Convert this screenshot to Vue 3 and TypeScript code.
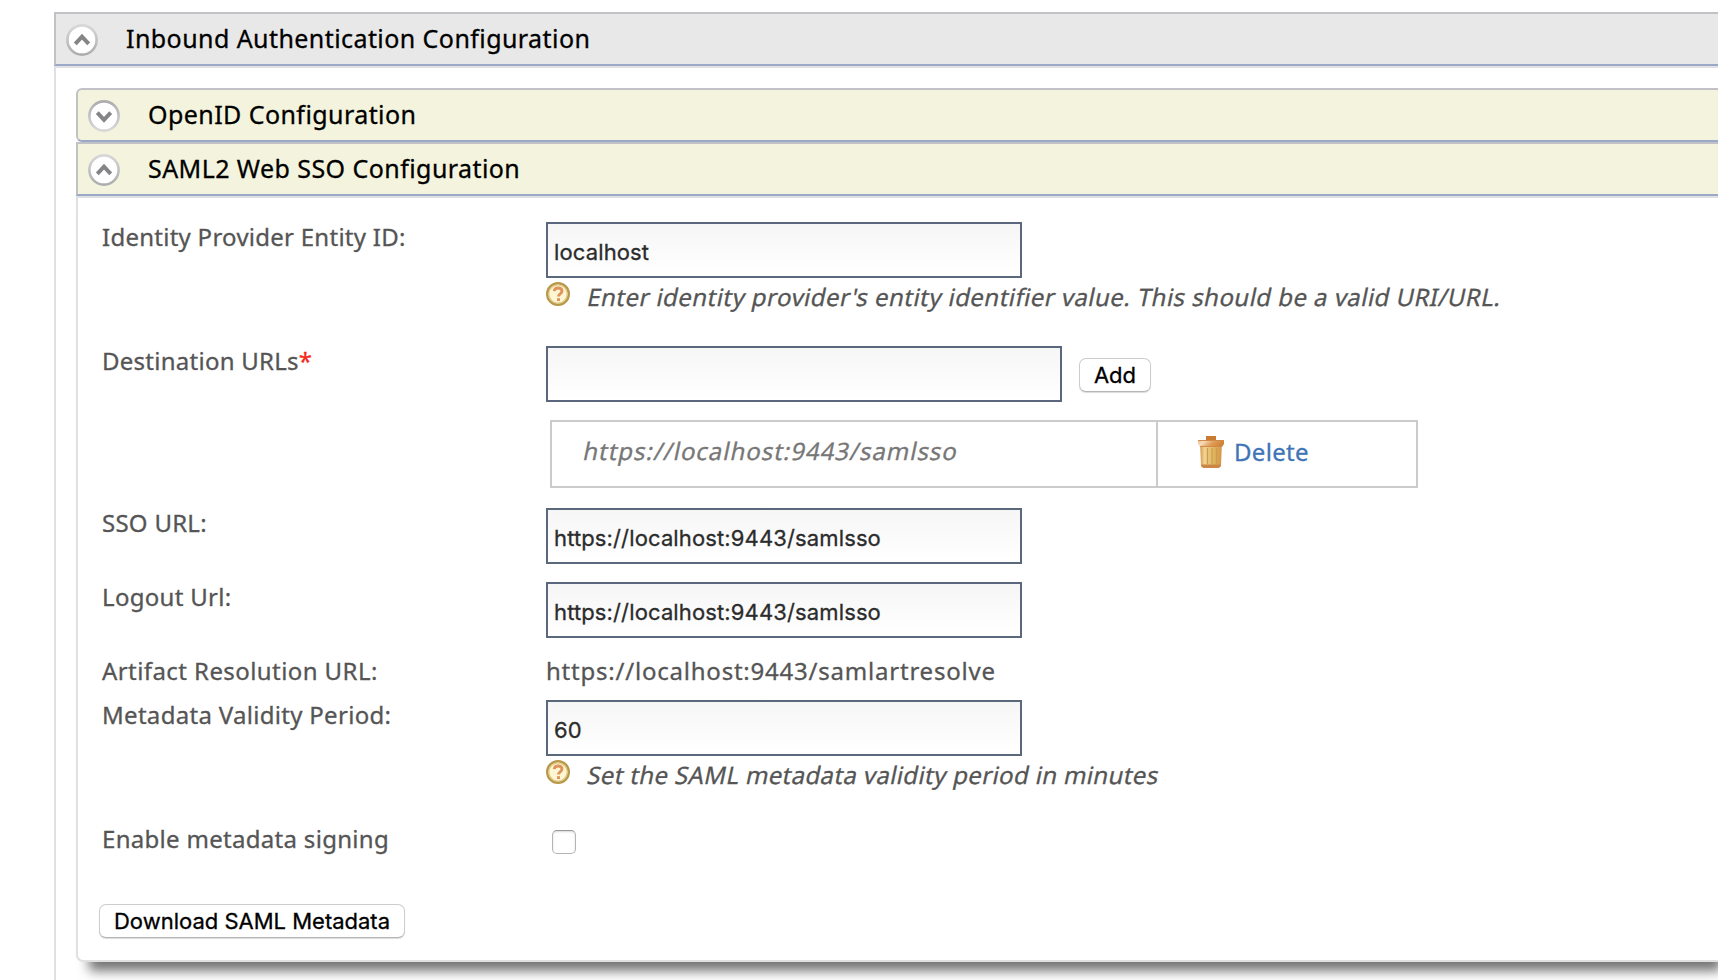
<script setup lang="ts">
import { ref } from 'vue'

const entityId = ref('localhost')
const destination = ref('')
const destinations = ref<string[]>(['https://localhost:9443/samlsso'])
const ssoUrl = ref('https://localhost:9443/samlsso')
const logoutUrl = ref('https://localhost:9443/samlsso')
const validity = ref('60')
const signing = ref(false)

function addDestination(): void {
  const value = destination.value.trim()
  if (value) {
    destinations.value.push(value)
    destination.value = ''
  }
}

function removeDestination(index: number): void {
  destinations.value.splice(index, 1)
}
</script>

<template>
  <svg class="defs" width="0" height="0" aria-hidden="true">
    <defs>
      <linearGradient id="ring" x1="0" y1="0" x2="0" y2="1">
        <stop offset="0" stop-color="#d8d8da" />
        <stop offset="1" stop-color="#adadaf" />
      </linearGradient>
      <linearGradient id="ringFlip" x1="0" y1="0" x2="0" y2="1">
        <stop offset="0" stop-color="#adadaf" />
        <stop offset="1" stop-color="#d8d8da" />
      </linearGradient>
      <linearGradient id="canBody" x1="0" y1="0" x2="1" y2="0">
        <stop offset="0" stop-color="#d99a4c" />
        <stop offset="0.2" stop-color="#f0d494" />
        <stop offset="0.6" stop-color="#dfb861" />
        <stop offset="1" stop-color="#d3944a" />
      </linearGradient>
      <linearGradient id="canLid" x1="0" y1="0" x2="1" y2="0.3">
        <stop offset="0" stop-color="#e9b98a" />
        <stop offset="0.25" stop-color="#f7dcbd" />
        <stop offset="0.6" stop-color="#e2a05a" />
        <stop offset="1" stop-color="#cf8238" />
      </linearGradient>
      <symbol id="chevronUp" viewBox="0 0 32 32">
        <circle cx="16" cy="16" r="14.6" fill="#fff" stroke="url(#ring)" stroke-width="2.6" />
        <path d="M9.300 19.800 16 12.600l6.700 7.200" fill="none" stroke="#858587" stroke-width="4" />
      </symbol>
      <symbol id="chevronDown" viewBox="0 0 32 32">
        <circle cx="16" cy="16" r="14.6" fill="#fff" stroke="url(#ringFlip)" stroke-width="2.6" />
        <path d="M9.300 12.600 16 19.800l6.700-7.200" fill="none" stroke="#858587" stroke-width="4" />
      </symbol>
      <symbol id="help" viewBox="0 0 24 24">
        <circle cx="12" cy="12" r="10.800" fill="#fdf6d3" stroke="#b8974a" stroke-width="2.400" />
        <circle cx="12" cy="12" r="9.200" fill="none" stroke="#e0cc8a" stroke-width="1.300" />
        <path d="M8.200 9.100c.3-2.100 1.900-3.100 3.900-3.100 2.300 0 3.900 1.200 3.900 3.100 0 2.700-3.500 2.700-3.500 5.300" fill="none" stroke="#e0935a" stroke-width="2.900" />
        <path d="M11 16.200h3v2.800h-3z" fill="#e0935a" />
      </symbol>
    </defs>
  </svg>

  <section class="outer">
    <header class="bar bar-main">
      <svg class="toggle"><use href="#chevronUp" /></svg>
      <h2 class="title">Inbound Authentication Configuration</h2>
    </header>

    <div class="content">
      <header class="bar bar-sub rounded">
        <svg class="toggle"><use href="#chevronDown" /></svg>
        <h2 class="title">OpenID Configuration</h2>
      </header>
      <header class="bar bar-sub">
        <svg class="toggle"><use href="#chevronUp" /></svg>
        <h2 class="title">SAML2 Web SSO Configuration</h2>
      </header>

      <div class="panel">
        <div class="row row-entity">
          <label class="label snug">Identity Provider Entity ID:</label>
          <div class="field">
            <input v-model="entityId" class="input" type="text" />
            <div class="hint">
              <svg class="help"><use href="#help" /></svg>
              <span class="slanted airy">Enter identity provider's entity identifier value. This should be a valid URI/URL.</span>
            </div>
          </div>
        </div>

        <div class="row row-destination">
          <label class="label snug">Destination URLs<span class="required">*</span></label>
          <div class="field">
            <div class="adder">
              <input v-model="destination" class="input input-long" type="text" />
              <button class="button button-add" type="button" @click="addDestination">Add</button>
            </div>
            <div class="list">
              <div v-for="(url, index) in destinations" :key="url" class="entry">
                <div class="entry-url"><span class="slanted">{{ url }}</span></div>
                <a class="entry-delete" @click="removeDestination(index)">
                  <svg class="trash" viewBox="0 0 26 32">
                    <path d="M8 4V0h10v4z" fill="#cb7a31" />
                    <path d="M2.200 10h21.600L23 30l-2 2H5l-2-2z" fill="url(#canBody)" />
                    <path d="M9.500 12v16M14 12v16M18.500 12v16" stroke="#cf9a4a" stroke-width="1.200" />
                    <path d="M3 28.500h20l-.6 1.700L20.500 32h-15l-1.900-1.800z" fill="#cc8544" />
                    <path d="M0 4h26v4l-2 3H2L0 8z" fill="url(#canLid)" />
                    <path d="M0 4.500h26M2 10.500h22" stroke="#d18a49" stroke-width="1" />
                  </svg>
                  <span>Delete</span>
                </a>
              </div>
            </div>
          </div>
        </div>

        <div class="row row-input">
          <label class="label snug">SSO URL:</label>
          <input v-model="ssoUrl" class="input" type="text" />
        </div>
        <div class="row row-input">
          <label class="label">Logout Url:</label>
          <input v-model="logoutUrl" class="input" type="text" />
        </div>
        <div class="row row-artifact">
          <label class="label loose">Artifact Resolution URL:</label>
          <span class="value">https://localhost:9443/samlartresolve</span>
        </div>
        <div class="row row-validity">
          <label class="label">Metadata Validity Period:</label>
          <div class="field">
            <input v-model="validity" class="input" type="text" />
            <div class="hint">
              <svg class="help"><use href="#help" /></svg>
              <span class="slanted">Set the SAML metadata validity period in minutes</span>
            </div>
          </div>
        </div>
        <div class="row row-signing">
          <label class="label">Enable metadata signing</label>
          <input v-model="signing" class="checkbox" type="checkbox" />
        </div>

        <button class="button button-download" type="button">Download SAML Metadata</button>
      </div>
    </div>
  </section>
</template>

<style>
body {
  background: #fff;
  overflow: hidden;
}
</style>

<style scoped>
* {
  box-sizing: border-box;
}

.defs {
  position: absolute;
}

.outer {
  height: 980px;
  padding: 12px 0 0 54px;
  overflow: hidden;
  font-family: "Noto Sans", "Open Sans", sans-serif;
  font-size: 24px;
  line-height: 30px;
  color: #555;
  -webkit-text-stroke: 0.3px currentColor;
}

.bar {
  display: flex;
  align-items: center;
  height: 54px;
  border: 2px solid #c2c2c6;
  border-right: 0;
  border-bottom-color: #9aa9c8;
  padding-left: 10px;
}

.bar-main {
  background: #e8e8e8;
}

.bar-sub {
  background: #f4f3dd;
}

.rounded {
  border-radius: 6px 0 0 6px;
}

.toggle {
  flex: none;
  width: 32px;
  height: 32px;
  margin-top: 2px;
}

.title {
  margin: 0 0 2px 28px;
  font-size: 25px;
  font-weight: 400;
  line-height: 30px;
  letter-spacing: 0.43px;
  color: #000;
  white-space: nowrap;
}

.content {
  height: 914px;
  border-top: 2px solid #e2e2e4;
  border-left: 2px solid #e0e0e2;
  padding: 20px 0 0 20px;
}

.panel {
  height: 766px;
  border: 2px solid #e0e0e2;
  border-right: 0;
  border-bottom-left-radius: 7px;
  padding: 24px 0 0 24px;
  background: #fff;
  box-shadow: 8px 14px 12px -5px #747474;
}

.row {
  display: flex;
  align-items: flex-start;
}

.row-entity {
  height: 124px;
}

.row-destination {
  height: 162px;
}

.row-input {
  height: 74px;
}

.row-artifact {
  height: 44px;
}

.row-validity {
  height: 124px;
}

.row-signing {
  height: 80px;
}

.label {
  flex: none;
  width: 444px;
  letter-spacing: 0.3px;
  white-space: nowrap;
}

.snug {
  letter-spacing: 0.26px;
}

.loose {
  letter-spacing: 0.42px;
}

.required {
  color: #f42a1c;
}

.input {
  display: block;
  width: 476px;
  height: 56px;
  margin: 0;
  border: 2px solid #5b677d;
  border-radius: 0;
  padding: 3px 6px 0;
  background: linear-gradient(#f6f6f6, #fff);
  font-family: Inter, Roboto, sans-serif;
  font-size: 22px;
  letter-spacing: 0.13px;
  color: #2b2b2b;
  outline: none;
}

.input-long {
  width: 516px;
}

.adder {
  display: flex;
  align-items: flex-start;
}

.hint {
  display: flex;
  align-items: flex-start;
  padding-top: 4px;
}

.help {
  flex: none;
  width: 24px;
  height: 24px;
  margin-right: 16px;
}

.slanted {
  display: inline-block;
  transform: skewX(-12deg);
  transform-origin: 0 24px;
  letter-spacing: 0.36px;
  white-space: nowrap;
}

.airy {
  letter-spacing: 0.45px;
}

.button {
  display: block;
  border: 1px solid #cdcdcd;
  border-bottom-color: #b5b5b5;
  border-radius: 7px;
  padding: 0;
  background: #fff;
  box-shadow: 0 1px 1px rgba(0, 0, 0, 0.14);
  font-family: Inter, Roboto, sans-serif;
  font-size: 22px;
  line-height: 32px;
  color: #000;
  white-space: nowrap;
}

.button-add {
  width: 72px;
  height: 34px;
  margin: 12px 0 0 17px;
}

.button-download {
  width: 306px;
  height: 34px;
  margin-left: -3px;
}

.list {
  width: 868px;
  margin: 18px 0 0 4px;
  border: 2px solid #cbcbcb;
}

.entry {
  display: flex;
  height: 64px;
}

.entry-url {
  width: 606px;
  border-right: 2px solid #cbcbcb;
  padding: 14px 0 0 30px;
  color: #777;
}

.entry-url .slanted {
  letter-spacing: 0.97px;
}

.entry-delete {
  display: flex;
  align-items: flex-start;
  padding: 14px 0 0 40px;
  letter-spacing: 0.3px;
  color: #3f74b5;
  cursor: pointer;
}

.entry-delete span {
  margin: 1px 0 0 10px;
}

.trash {
  width: 26px;
  height: 32px;
}

.value {
  letter-spacing: 0.78px;
}

.checkbox {
  appearance: none;
  width: 24px;
  height: 24px;
  margin: 6px 0 0 6px;
  border: 1px solid #b4b4b4;
  border-top-color: #9a9a9a;
  border-radius: 5px;
  background: #fff;
  box-shadow: inset 0 1px 2px rgba(0, 0, 0, 0.16);
}
</style>
